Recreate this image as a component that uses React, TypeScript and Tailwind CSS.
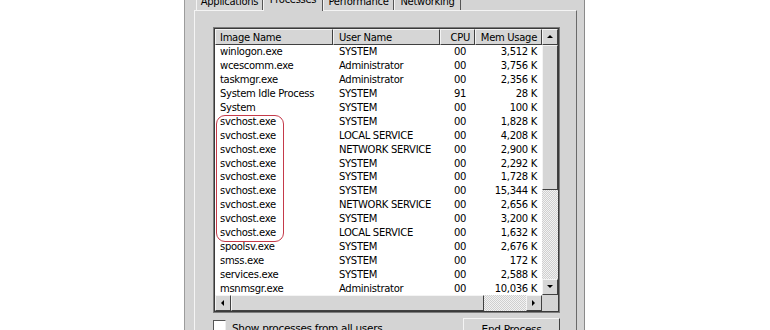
import React from 'react';

type Proc = { name: string; user: string; cpu: string; mem: string };

const procs: Proc[] = [
  { name: 'winlogon.exe', user: 'SYSTEM', cpu: '00', mem: '3,512 K' },
  { name: 'wcescomm.exe', user: 'Administrator', cpu: '00', mem: '3,756 K' },
  { name: 'taskmgr.exe', user: 'Administrator', cpu: '00', mem: '2,356 K' },
  { name: 'System Idle Process', user: 'SYSTEM', cpu: '91', mem: '28 K' },
  { name: 'System', user: 'SYSTEM', cpu: '00', mem: '100 K' },
  { name: 'svchost.exe', user: 'SYSTEM', cpu: '00', mem: '1,828 K' },
  { name: 'svchost.exe', user: 'LOCAL SERVICE', cpu: '00', mem: '4,208 K' },
  { name: 'svchost.exe', user: 'NETWORK SERVICE', cpu: '00', mem: '2,900 K' },
  { name: 'svchost.exe', user: 'SYSTEM', cpu: '00', mem: '2,292 K' },
  { name: 'svchost.exe', user: 'SYSTEM', cpu: '00', mem: '1,728 K' },
  { name: 'svchost.exe', user: 'SYSTEM', cpu: '00', mem: '15,344 K' },
  { name: 'svchost.exe', user: 'NETWORK SERVICE', cpu: '00', mem: '2,656 K' },
  { name: 'svchost.exe', user: 'SYSTEM', cpu: '00', mem: '3,200 K' },
  { name: 'svchost.exe', user: 'LOCAL SERVICE', cpu: '00', mem: '1,632 K' },
  { name: 'spoolsv.exe', user: 'SYSTEM', cpu: '00', mem: '2,676 K' },
  { name: 'smss.exe', user: 'SYSTEM', cpu: '00', mem: '172 K' },
  { name: 'services.exe', user: 'SYSTEM', cpu: '00', mem: '2,588 K' },
  { name: 'msnmsgr.exe', user: 'Administrator', cpu: '00', mem: '10,036 K' },
];

const raised = 'bg-[#d6d6d6] border border-t-[#f4f4f4] border-l-[#f4f4f4] border-b-[#404040] border-r-[#404040]';

const Arrow: React.FC<{ dir: 'up' | 'down' | 'left' | 'right' }> = ({ dir }) => {
  const pts = {
    up: '1,5 4,2 7,5',
    down: '1,2 4,5 7,2',
    left: '5,1 2,4 5,7',
    right: '2,1 5,4 2,7',
  }[dir];
  return (
    <svg width="8" height="8" viewBox="0 0 8 8">
      <polygon points={pts} fill="#000" />
    </svg>
  );
};

const ScrollBtn: React.FC<{ dir: 'up' | 'down' | 'left' | 'right' }> = ({ dir }) => (
  <div className={`w-[16px] h-[16px] shrink-0 flex items-center justify-center ${raised}`}>
    <Arrow dir={dir} />
  </div>
);

const track = 'bg-[repeating-conic-gradient(#cfcfcf_0%_25%,#f2f2f2_0%_50%)] bg-[length:2px_2px]';

const tabs = [
  { label: 'Applications', w: 'w-[67px]' },
  { label: 'Processes', w: 'w-[60px]' },
  { label: 'Performance', w: 'w-[71px]' },
  { label: 'Networking', w: 'w-[67px]' },
];

export default function App() {
  return (
    <div className="w-[770px] h-[330px] bg-white overflow-hidden flex" style={{ fontFamily: '"DejaVu Sans", Tahoma, sans-serif' }}>
      <div className="ml-[184px] w-[401px] h-full bg-[#d4d4d4] border-l border-r border-l-[#9c9c9c] border-r-[#8a8a8a] flex flex-col pl-[9px] pr-[7px] text-[10px] tracking-[-0.3px] text-black">
        {/* Tabs */}
        <div className="h-[10px] flex items-end pl-[2px] shrink-0">
          {tabs.map((t) => {
            const active = t.label === 'Processes';
            return (
              <div
                key={t.label}
                className={`${t.w} flex justify-center leading-[14px] border-l border-r border-l-[#f4f4f4] border-r-[#555] ${
                  active ? 'h-[20px] -mb-[1px] pt-[2px] bg-[#d4d4d4] relative z-10' : 'h-[16px] pt-[1px]'
                }`}
              >
                {t.label}
              </div>
            );
          })}
        </div>

        {/* Tab panel */}
        <div className="flex-1 border-t border-l border-r border-t-[#f4f4f4] border-l-[#f4f4f4] border-r-[#6a6a6a] pl-[18px] pt-[16px]">
          {/* List view */}
          <div className="w-[347px] border border-[#7c7c7c]">
            <div className="border border-[#3a3a3a] bg-white flex flex-col">
              <div className="flex">
                <div className="w-[327px] flex flex-col">
                  {/* Header */}
                  <div className="flex h-[16px]">
                    <div className={`w-[118px] pl-[4px] flex items-center ${raised}`}>Image Name</div>
                    <div className={`w-[107px] pl-[5px] flex items-center ${raised}`}>User Name</div>
                    <div className={`w-[35px] pr-[4px] flex items-center justify-end ${raised}`}>CPU</div>
                    <div className={`w-[67px] pr-[4px] flex items-center justify-end ${raised}`}>Mem Usage</div>
                  </div>
                  {/* Rows */}
                  <div className="relative h-[250px]">
                    {procs.map((p, i) => (
                      <div key={i} className="flex h-[13.9px] items-center">
                        <div className="w-[118px] pl-[5px]">{p.name}</div>
                        <div className="w-[107px] pl-[6px]">{p.user}</div>
                        <div className="w-[35px] pr-[9px] text-right">{p.cpu}</div>
                        <div className="w-[67px] pr-[5px] text-right">{p.mem}</div>
                      </div>
                    ))}
                    <div className="absolute left-[1px] top-[70px] w-[68px] h-[127px] border-[1.5px] border-[#c43a4a] rounded-[9px]" />
                  </div>
                </div>
                {/* Vertical scrollbar */}
                <div className="w-[16px] flex flex-col">
                  <ScrollBtn dir="up" />
                  <div className={`h-[145px] ${raised}`} />
                  <div className={`flex-1 ${track}`} />
                  <ScrollBtn dir="down" />
                </div>
              </div>
              {/* Horizontal scrollbar */}
              <div className="flex h-[16px]">
                <ScrollBtn dir="left" />
                <div className={`w-[253px] ${raised}`} />
                <div className={`flex-1 ${track}`} />
                <ScrollBtn dir="right" />
                <div className="w-[16px] bg-[#d4d4d4]" />
              </div>
            </div>
          </div>

          {/* Bottom controls */}
          <div className="w-[347px] flex justify-between items-start mt-[5px]">
            <div className="flex items-start gap-[6px] pt-[2px]">
              <div className="w-[13px] h-[13px] bg-white border border-t-[#555] border-l-[#555] border-b-[#eee] border-r-[#eee]" />
              <span className="text-[10.5px] leading-[13px] pt-[2px]">Show processes from all users</span>
            </div>
            <div className={`w-[97px] h-[23px] flex items-center justify-center text-[10.5px] ${raised} border-[#303030] border-t-[#f4f4f4] border-l-[#f4f4f4]`}>
              End Process
            </div>
          </div>
        </div>
      </div>
    </div>
  );
}
